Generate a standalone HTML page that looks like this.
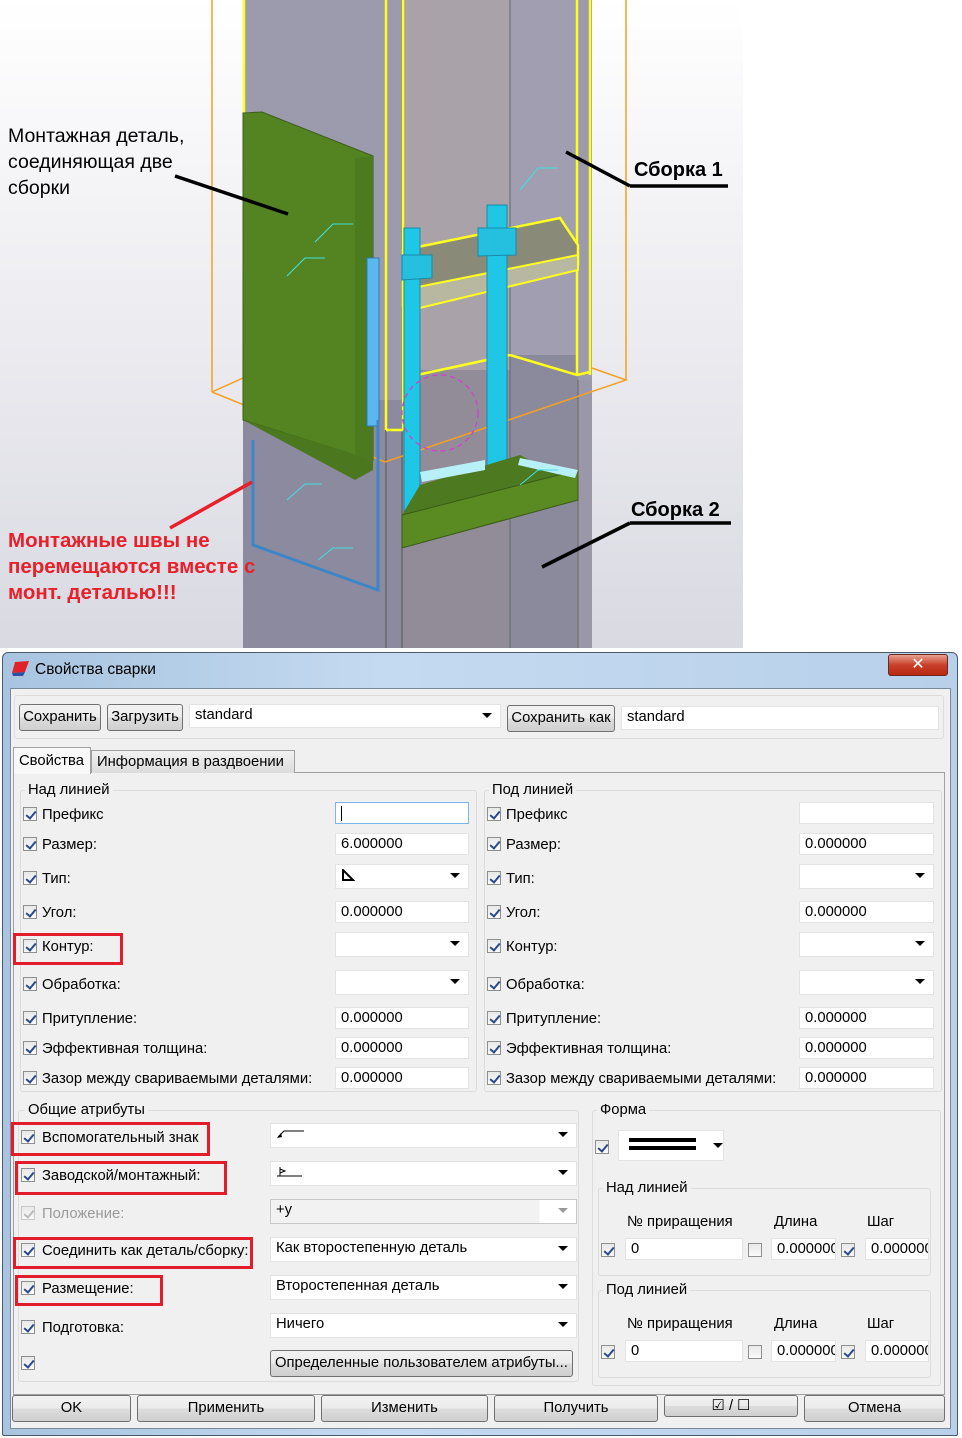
<!DOCTYPE html>
<html><head><meta charset="utf-8">
<style>
*{margin:0;padding:0;box-sizing:border-box}
body{width:962px;height:1438px;position:relative;background:#fff;font-family:"Liberation Sans","DejaVu Sans",sans-serif;font-size:14.8px;color:#000;overflow:hidden}
.a{position:absolute;white-space:nowrap}
.cb{position:absolute;width:14px;height:14px;border:1px solid #8e8f8f;background:linear-gradient(#e8e8e8,#fafafa)}
.cb::after{content:"";position:absolute;left:4px;top:1px;width:4px;height:8px;border:solid #2a4a8a;border-width:0 2px 2px 0;transform:rotate(40deg)}
.cb.off::after{display:none}
.cb.dis{border-color:#c8c8c8}.cb.dis::after{border-color:#bbb}
.in{position:absolute;background:#fff;border:1px solid #e3e3e3;height:22px;padding-left:5px;line-height:20px}
.dd::after{content:"";position:absolute;right:8px;top:8px;border:5px solid transparent;border-top:5px solid #000;border-bottom:0}
.dd.g::after{border-top-color:#999}
.btn{position:absolute;border:1px solid #707070;border-radius:3px;background:linear-gradient(#f2f2f2 0,#ebebeb 50%,#dddddd 51%,#cfcfcf);text-align:center;line-height:25px;height:27px}
.grp{position:absolute;border:1px solid #dcdcdc;border-radius:3px}
.gl{position:absolute;background:#f0f0f0;padding:0 3px;line-height:16px}
.red{position:absolute;border:3px solid #e21c2a}
.lab{position:absolute;line-height:16px}
</style></head><body>

<svg class="a" style="left:0;top:0" width="962" height="648" viewBox="0 0 962 648">
<defs><linearGradient id="bg" x1="0" y1="0" x2="0" y2="1"><stop offset="0" stop-color="#ffffff"/><stop offset="1" stop-color="#d9d9e2"/></linearGradient></defs>
<rect x="0" y="0" width="743" height="648" fill="url(#bg)"/>
<rect x="743" y="0" width="219" height="648" fill="#fff"/>
<rect x="243" y="0" width="349" height="648" fill="#9c9aad"/>
<rect x="243" y="400" width="349" height="248" fill="#8c8a9e"/>
<rect x="402" y="0" width="108" height="648" fill="#a9a3a9"/>
<rect x="402" y="370" width="108" height="278" fill="#918c98"/>
<rect x="510" y="0" width="68" height="648" fill="#a09eb0"/>
<rect x="510" y="355" width="68" height="293" fill="#8b899c"/>
<rect x="578" y="380" width="14" height="268" fill="#9a98a8"/>
<line x1="386" y1="0" x2="386" y2="648" stroke="#555" stroke-width="1"/>
<line x1="402" y1="0" x2="402" y2="648" stroke="#555" stroke-width="1"/>
<line x1="510" y1="0" x2="510" y2="648" stroke="#666" stroke-width="1"/>
<line x1="578" y1="380" x2="578" y2="648" stroke="#666" stroke-width="1"/>
<g stroke="#ffff1e" stroke-width="2.5" fill="none">
<line x1="244" y1="0" x2="244" y2="385"/>
<line x1="386" y1="0" x2="386" y2="430"/>
<line x1="403" y1="0" x2="403" y2="430"/>
<line x1="577" y1="0" x2="577" y2="375"/>
<line x1="590" y1="0" x2="590" y2="375"/>
<polyline points="403,430 386,430"/>
<polyline points="510,355 577,375 590,372"/>
<polyline points="403,378 510,355"/>
</g>
<g stroke="#f5a020" stroke-width="1.5" fill="none">
<line x1="212" y1="0" x2="212" y2="392"/>
<line x1="626" y1="0" x2="626" y2="380"/>
<polyline points="212,392 243,378"/>
<polyline points="212,392 385,462 626,380 592,368"/>
</g>
<polygon points="403,250 560,218 578,245 578,265 403,305" fill="#8a8a78" stroke="#ffff1e" stroke-width="2.5"/>
<polygon points="403,290 578,255 578,270 403,312" fill="#b8b8a0" stroke="#ffff1e" stroke-width="2"/>
<rect x="404" y="228" width="16" height="285" fill="#1fc6e6" stroke="#1a8aa8"/>
<rect x="487" y="205" width="20" height="290" fill="#1fc6e6" stroke="#1a8aa8"/>
<polygon points="402,255 432,255 432,278 402,280" fill="#25c0e0" stroke="#188aa8"/>
<polygon points="478,228 516,228 516,255 478,256" fill="#25c0e0" stroke="#188aa8"/>
<polygon points="420,485 520,455 578,485 578,495 402,530 402,515" fill="#4d7a20"/>
<polygon points="402,515 578,470 578,500 402,548" fill="#5a8a22" stroke="#3a5a18"/>
<polygon points="520,458 578,470 575,478 518,465" fill="#b8f0f8"/>
<polygon points="420,472 485,460 485,470 422,482" fill="#b8f0f8"/>
<circle cx="440" cy="413" r="38" fill="none" stroke="#d040d0" stroke-dasharray="5,4" stroke-width="1.3"/>
<polygon points="243,113 262,112 373,156 373,460 355,455 243,420" fill="#548422" stroke="#3c5e1c"/>
<polygon points="355,158 373,156 373,460 355,480" fill="#4c7a1f"/>
<polygon points="243,420 355,480 373,470 373,460 243,420" fill="#4b771e"/>
<rect x="367" y="258" width="12" height="168" fill="#5ab8f0" stroke="#2e7ab0"/>
<polyline points="253,440 253,545 378,590 378,420" fill="none" stroke="#3c86c8" stroke-width="3"/>
<g stroke="#40e0e0" stroke-width="1" fill="none">
<polyline points="315,242 333,224 353,224"/><polyline points="287,276 305,258 325,258"/>
<polyline points="287,500 305,484 322,484"/><polyline points="318,560 333,548 353,548"/>
<polyline points="520,190 538,168 558,168"/><polyline points="520,485 538,470 558,470"/>
</g>
<g stroke="#000" stroke-width="3.5">
<line x1="175" y1="176" x2="288" y2="214"/>
<line x1="566" y1="152" x2="630" y2="186"/>
<line x1="630" y1="186" x2="728" y2="186"/>
<line x1="542" y1="567" x2="630" y2="523"/>
<line x1="630" y1="523" x2="731" y2="523"/>
</g>
<line x1="170" y1="528" x2="252" y2="482" stroke="#e8202a" stroke-width="3.5"/>
<g font-family="Liberation Sans, sans-serif" font-size="19.5">
<text x="8" y="142">Монтажная деталь,</text>
<text x="8" y="168">соединяющая две</text>
<text x="8" y="194">сборки</text>
<text x="634" y="176" font-weight="bold" font-size="20">Сборка 1</text>
<text x="631" y="516" font-weight="bold" font-size="20">Сборка 2</text>
<g fill="#e8202a" font-weight="bold" font-size="20.5">
<text x="8" y="547">Монтажные швы не</text>
<text x="8" y="573">перемещаются вместе с</text>
<text x="8" y="599">монт. деталью!!!</text>
</g></g>
</svg>

<div class="a" style="left:0;top:648px;width:962px;height:790px;background:#fff"></div>
<div class="a" style="left:2px;top:652px;width:956px;height:784px;border:1px solid #4a5a6a;border-radius:6px 6px 2px 2px;background:linear-gradient(90deg,#a8c4e0,#c4daf0 40%,#b8d0ea)"></div>
<div class="a" style="left:10px;top:688px;width:941px;height:741px;background:#f0f0f0;border:1px solid #7a8a9a"></div>
<svg class="a" style="left:11px;top:660px" width="20" height="18"><polygon points="4,2 18,1 14,12 1,13" fill="#e0232a"/><polygon points="1,13 14,12 12,16 2,16" fill="#3050a0"/></svg>
<div class="a" style="left:35px;top:661px;font-size:15.5px">Свойства сварки</div>
<div class="a" style="left:888px;top:654px;width:60px;height:22px;border:1px solid #6a2a20;border-radius:3px;background:linear-gradient(#e8a090,#c8402a 50%,#b82810);color:#fff;text-align:center;font-weight:bold;font-size:16px;line-height:20px">✕</div>

<div class="grp" style="left:14px;top:695px;width:930px;height:44px"></div>
<div class="btn" style="left:19px;top:704px;width:82px">Сохранить</div>
<div class="btn" style="left:107px;top:704px;width:76px">Загрузить</div>
<div class="in dd" style="left:189px;top:704px;width:312px;height:24px">standard</div>
<div class="btn" style="left:507px;top:705px;width:108px">Сохранить как</div>
<div class="in" style="left:621px;top:706px;width:318px;height:24px">standard</div>

<div class="a" style="left:13px;top:772px;width:932px;height:623px;border:1px solid #a0a0a0;background:#f0f0f0"></div>
<div class="a" style="left:13px;top:747px;width:78px;height:27px;border:1px solid #a0a0a0;border-bottom:0;background:#f8f8f8;padding:5px 0 0 5px">Свойства</div>
<div class="a" style="left:91px;top:750px;width:204px;height:23px;border:1px solid #a0a0a0;border-bottom:0;background:linear-gradient(#f2f2f2,#dcdcdc);padding:3px 0 0 5px">Информация в раздвоении</div>

<div class="grp" style="left:20px;top:790px;width:457px;height:302px"></div>
<div class="gl" style="left:25px;top:782px">Над линией</div>
<div class="grp" style="left:484px;top:790px;width:458px;height:302px"></div>
<div class="gl" style="left:489px;top:782px">Под линией</div>

<div class="cb" style="left:23px;top:807px"></div><div class="lab" style="left:42px;top:807px">Префикс</div>
<div class="in" style="left:335px;top:802px;width:134px;border-color:#7eb4ea"><span style="display:inline-block;width:1px;height:15px;background:#000;vertical-align:middle"></span></div>
<div class="cb" style="left:23px;top:837px"></div><div class="lab" style="left:42px;top:837px">Размер:</div>
<div class="in" style="left:335px;top:833px;width:134px">6.000000</div>
<div class="cb" style="left:23px;top:871px"></div><div class="lab" style="left:42px;top:871px">Тип:</div>
<div class="in dd" style="left:335px;top:864px;width:134px;height:25px"><svg width="14" height="14" style="margin-top:4px"><path d="M2 1 L2 11 L12 11 Z" fill="none" stroke="#000" stroke-width="2"/></svg></div>
<div class="cb" style="left:23px;top:905px"></div><div class="lab" style="left:42px;top:905px">Угол:</div>
<div class="in" style="left:335px;top:901px;width:134px">0.000000</div>
<div class="cb" style="left:23px;top:939px"></div><div class="lab" style="left:42px;top:939px">Контур:</div>
<div class="in dd" style="left:335px;top:932px;width:134px;height:25px"></div>
<div class="red" style="left:13px;top:933px;width:110px;height:32px"></div>
<div class="cb" style="left:23px;top:977px"></div><div class="lab" style="left:42px;top:977px">Обработка:</div>
<div class="in dd" style="left:335px;top:970px;width:134px;height:25px"></div>
<div class="cb" style="left:23px;top:1011px"></div><div class="lab" style="left:42px;top:1011px">Притупление:</div>
<div class="in" style="left:335px;top:1007px;width:134px">0.000000</div>
<div class="cb" style="left:23px;top:1041px"></div><div class="lab" style="left:42px;top:1041px">Эффективная толщина:</div>
<div class="in" style="left:335px;top:1037px;width:134px">0.000000</div>
<div class="cb" style="left:23px;top:1071px"></div><div class="lab" style="left:42px;top:1071px">Зазор между свариваемыми деталями:</div>
<div class="in" style="left:335px;top:1067px;width:134px">0.000000</div>

<div class="cb" style="left:487px;top:807px"></div><div class="lab" style="left:506px;top:807px">Префикс</div>
<div class="in" style="left:799px;top:802px;width:135px"></div>
<div class="cb" style="left:487px;top:837px"></div><div class="lab" style="left:506px;top:837px">Размер:</div>
<div class="in" style="left:799px;top:833px;width:135px">0.000000</div>
<div class="cb" style="left:487px;top:871px"></div><div class="lab" style="left:506px;top:871px">Тип:</div>
<div class="in dd" style="left:799px;top:864px;width:135px;height:25px"></div>
<div class="cb" style="left:487px;top:905px"></div><div class="lab" style="left:506px;top:905px">Угол:</div>
<div class="in" style="left:799px;top:901px;width:135px">0.000000</div>
<div class="cb" style="left:487px;top:939px"></div><div class="lab" style="left:506px;top:939px">Контур:</div>
<div class="in dd" style="left:799px;top:932px;width:135px;height:25px"></div>
<div class="cb" style="left:487px;top:977px"></div><div class="lab" style="left:506px;top:977px">Обработка:</div>
<div class="in dd" style="left:799px;top:970px;width:135px;height:25px"></div>
<div class="cb" style="left:487px;top:1011px"></div><div class="lab" style="left:506px;top:1011px">Притупление:</div>
<div class="in" style="left:799px;top:1007px;width:135px">0.000000</div>
<div class="cb" style="left:487px;top:1041px"></div><div class="lab" style="left:506px;top:1041px">Эффективная толщина:</div>
<div class="in" style="left:799px;top:1037px;width:135px">0.000000</div>
<div class="cb" style="left:487px;top:1071px"></div><div class="lab" style="left:506px;top:1071px">Зазор между свариваемыми деталями:</div>
<div class="in" style="left:799px;top:1067px;width:135px">0.000000</div>

<div class="grp" style="left:18px;top:1110px;width:561px;height:272px"></div>
<div class="gl" style="left:25px;top:1102px">Общие атрибуты</div>
<div class="cb" style="left:21px;top:1130px"></div><div class="lab" style="left:42px;top:1130px">Вспомогательный знак</div>
<div class="in dd" style="left:270px;top:1123px;width:307px;height:25px"><svg width="30" height="14" style="margin-top:4px"><path d="M2 9 L8 3 L28 3" fill="none" stroke="#000"/><path d="M1 10 L5 5 L6 9Z" fill="#000"/></svg></div>
<div class="red" style="left:11px;top:1122px;width:199px;height:34px"></div>
<div class="cb" style="left:21px;top:1168px"></div><div class="lab" style="left:42px;top:1168px">Заводской/монтажный:</div>
<div class="in dd" style="left:270px;top:1161px;width:307px;height:25px"><svg width="30" height="14" style="margin-top:3px"><path d="M4 2 L4 11 M1 11 L6 11 L26 11 M4 4 L9 6 L4 8" fill="none" stroke="#000"/></svg></div>
<div class="red" style="left:15px;top:1161px;width:212px;height:34px"></div>
<div class="cb dis" style="left:21px;top:1206px"></div><div class="lab" style="left:42px;top:1206px;color:#9a9a9a">Положение:</div>
<div class="in dd g" style="left:270px;top:1199px;width:307px;height:25px;background:linear-gradient(90deg,#f2f2f2 88%,#fff 88%);border-color:#c8c8c8">+y</div>
<div class="cb" style="left:21px;top:1243px"></div><div class="lab" style="left:42px;top:1243px">Соединить как деталь/сборку:</div>
<div class="in dd" style="left:270px;top:1237px;width:307px;height:25px">Как второстепенную деталь</div>
<div class="red" style="left:13px;top:1237px;width:240px;height:32px"></div>
<div class="cb" style="left:21px;top:1281px"></div><div class="lab" style="left:42px;top:1281px">Размещение:</div>
<div class="in dd" style="left:270px;top:1275px;width:307px;height:25px">Второстепенная деталь</div>
<div class="red" style="left:15px;top:1275px;width:148px;height:31px"></div>
<div class="cb" style="left:21px;top:1320px"></div><div class="lab" style="left:42px;top:1320px">Подготовка:</div>
<div class="in dd" style="left:270px;top:1313px;width:307px;height:25px">Ничего</div>
<div class="cb" style="left:21px;top:1356px"></div>
<div class="btn" style="left:270px;top:1350px;width:303px;text-align:left;padding-left:4px">Определенные пользователем атрибуты...</div>

<div class="grp" style="left:592px;top:1110px;width:349px;height:276px"></div>
<div class="gl" style="left:597px;top:1102px">Форма</div>
<div class="cb" style="left:595px;top:1140px"></div>
<div class="in" style="left:618px;top:1130px;width:106px;height:31px"><svg width="100" height="28"><rect x="5" y="7" width="67" height="4" fill="#000"/><rect x="5" y="15" width="67" height="4" fill="#000"/><path d="M89 12 L99 12 L94 17Z" fill="#000"/></svg></div>
<div class="grp" style="left:598px;top:1188px;width:333px;height:88px"></div>
<div class="gl" style="left:603px;top:1180px">Над линией</div>
<div class="lab" style="left:627px;top:1214px">№ приращения</div><div class="lab" style="left:774px;top:1214px">Длина</div><div class="lab" style="left:867px;top:1214px">Шаг</div>
<div class="cb" style="left:601px;top:1243px"></div><div class="in" style="left:625px;top:1238px;width:118px">0</div>
<div class="cb off" style="left:748px;top:1243px"></div><div class="in" style="left:771px;top:1238px;width:65px;overflow:hidden">0.000000</div>
<div class="cb" style="left:841px;top:1243px"></div><div class="in" style="left:865px;top:1238px;width:64px;overflow:hidden">0.000000</div>
<div class="grp" style="left:598px;top:1290px;width:333px;height:88px"></div>
<div class="gl" style="left:603px;top:1282px">Под линией</div>
<div class="lab" style="left:627px;top:1316px">№ приращения</div><div class="lab" style="left:774px;top:1316px">Длина</div><div class="lab" style="left:867px;top:1316px">Шаг</div>
<div class="cb" style="left:601px;top:1345px"></div><div class="in" style="left:625px;top:1340px;width:118px">0</div>
<div class="cb off" style="left:748px;top:1345px"></div><div class="in" style="left:771px;top:1340px;width:65px;overflow:hidden">0.000000</div>
<div class="cb" style="left:841px;top:1345px"></div><div class="in" style="left:865px;top:1340px;width:64px;overflow:hidden">0.000000</div>

<div class="btn" style="left:12px;top:1395px;width:119px">OK</div>
<div class="btn" style="left:137px;top:1395px;width:178px">Применить</div>
<div class="btn" style="left:321px;top:1395px;width:167px">Изменить</div>
<div class="btn" style="left:494px;top:1395px;width:164px">Получить</div>
<div class="btn" style="left:664px;top:1395px;width:134px;height:22px;line-height:20px">☑ / ☐</div>
<div class="btn" style="left:804px;top:1395px;width:141px">Отмена</div>
</body></html>
